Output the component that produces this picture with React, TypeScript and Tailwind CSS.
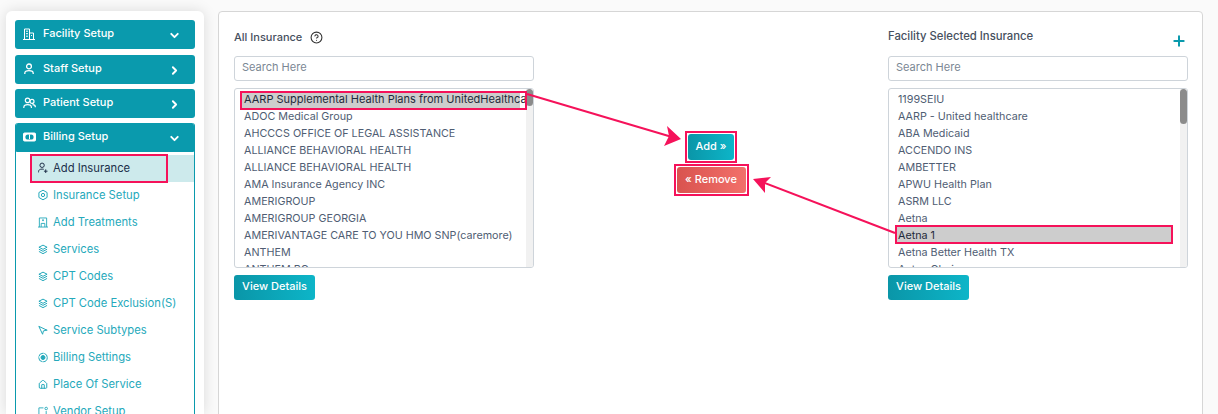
import { ChevronDown, ChevronRight, CircleHelp, Navigation, Plus, House } from "lucide-react"
import type { ReactNode } from "react"

const FONT = "font-['Inter','Noto_Sans',sans-serif]"

const allInsurance = [
  "AARP Supplemental Health Plans from UnitedHealthcare",
  "ADOC Medical Group",
  "AHCCCS OFFICE OF LEGAL ASSISTANCE",
  "ALLIANCE BEHAVIORAL HEALTH",
  "ALLIANCE BEHAVIORAL HEALTH",
  "AMA Insurance Agency INC",
  "AMERIGROUP",
  "AMERIGROUP GEORGIA",
  "AMERIVANTAGE CARE TO YOU HMO SNP(caremore)",
  "ANTHEM",
  "ANTHEM BC",
]

const selectedInsurance = [
  "1199SEIU",
  "AARP - United healthcare",
  "ABA Medicaid",
  "ACCENDO INS",
  "AMBETTER",
  "APWU Health Plan",
  "ASRM LLC",
  "Aetna",
  "Aetna 1",
  "Aetna Better Health TX",
  "Aetna Choice",
]

function BuildingIcon() {
  return (
    <svg width="12" height="12" viewBox="0 0 12 12" fill="none" stroke="currentColor" strokeWidth="1">
      <path d="M1.5 11V1h5v10M6.500 5h4v6M0 11.500h12M3 3.200h2M3 5.700h2M3 8.200h2M8 7.500h1" />
    </svg>
  )
}

function PersonIcon() {
  return (
    <svg width="12" height="12" viewBox="0 0 12 12" fill="none" stroke="currentColor" strokeWidth="1.3">
      <circle cx="6" cy="3.4" r="2.4" />
      <path d="M1.800 11v-.8C1.800 8.400 3.200 7.600 6 7.600s4.200.8 4.200 2.600v.8" />
    </svg>
  )
}

function PeopleIcon() {
  return (
    <svg width="13" height="12" viewBox="0 0 13 12" fill="none" stroke="currentColor" strokeWidth="1.2">
      <circle cx="4.600" cy="3.400" r="2.300" />
      <circle cx="9" cy="4.400" r="2" />
      <path d="M.8 11v-.6c0-1.800 1.400-2.800 3.800-2.800s3.800 1 3.800 2.800v.6M9.500 7.600c1.800 0 2.900.9 2.900 2.600" />
    </svg>
  )
}

function MoneyIcon() {
  return (
    <svg width="13" height="10" viewBox="0 0 13 10" fill="none">
      <rect x="0.5" y="1" width="12" height="8" rx="1" fill="currentColor" stroke="currentColor" />
      <circle cx="5" cy="5" r="2.6" fill="#0a9aad" />
      <circle cx="8" cy="5" r="2.6" fill="#0a9aad" />
      <path d="M6.500 3v4" stroke="currentColor" />
    </svg>
  )
}

function AddUserIcon() {
  return (
    <svg width="11" height="12" viewBox="0 0 11 12" fill="none" stroke="currentColor" strokeWidth="1.1">
      <circle cx="4.500" cy="3" r="2.400" />
      <path d="M.6 10.800V10c0-1.800 1.400-2.800 3.900-2.800.7 0 1.300.1 1.800.2M8.500 7.500v4M6.500 9.500h4" />
    </svg>
  )
}

function GearHexIcon() {
  return (
    <svg width="11" height="12" viewBox="0 0 11 12" fill="none" stroke="currentColor" strokeWidth="1.1">
      <path d="M5.500 .7l4.500 2.600v5.400l-4.500 2.600-4.500-2.600V3.300z" />
      <circle cx="5.500" cy="6" r="1.800" />
    </svg>
  )
}

function TreatmentIcon() {
  return (
    <svg width="11" height="11" viewBox="0 0 11 11" fill="none" stroke="currentColor">
      <path d="M1.500 10.500v-10h8v10M0 10.500h11M4.500 3h2M5.500 2v2M3.500 10.500V6.500h4v4" />
    </svg>
  )
}

function StackIcon() {
  return (
    <svg width="11" height="11" viewBox="0 0 11 11" fill="none" stroke="currentColor" strokeWidth="1.1">
      <path d="M5.500 .7l4.500 2.300-4.500 2.300L1 3zM1 5.200l4.500 2.300L10 5.200M1 7.600l4.500 2.500L10 7.600" />
    </svg>
  )
}

function TargetIcon() {
  return (
    <svg width="11" height="11" viewBox="0 0 11 11" fill="none" stroke="currentColor" strokeWidth="1.1">
      <circle cx="5.500" cy="5.500" r="4.700" strokeDasharray="7 .7" />
      <circle cx="5.500" cy="5.500" r="2.200" fill="currentColor" />
    </svg>
  )
}

function VendorIcon() {
  return (
    <svg width="11" height="11" viewBox="0 0 11 11" fill="none" stroke="currentColor">
      <path d="M1 11V1.500h5M9 5v6" />
      <circle cx="9" cy="2.200" r="1.400" />
    </svg>
  )
}

function SetupHeader({ icon, label, open }: { icon: ReactNode; label: string; open?: boolean }) {
  return (
    <div className="flex h-[29px] items-center rounded-[3px] bg-[#0a9aad] pl-1 pr-[14px] text-white">
      <span className="flex w-5 shrink-0 justify-center pb-[2px]">{icon}</span>
      <span className="ml-1 flex-1 pb-[3px] text-[11px] font-medium">{label}</span>
      {open ? (
        <ChevronDown size={13} strokeWidth={3.5} className="mt-[2px]" />
      ) : (
        <ChevronRight size={13} strokeWidth={3.5} className="mt-[2px]" />
      )}
    </div>
  )
}

function SubItem({ icon, label, active }: { icon: ReactNode; label: string; active?: boolean }) {
  return (
    <div
      className={`flex h-[27px] items-center gap-[5px] pb-[1px] pl-[8px] text-[11.25px] ${
        active ? "bg-[#cdeaec] text-[#20304a]" : "text-[#25a9bb]"
      }`}
    >
      <span className="flex w-[10px] shrink-0 justify-center">{icon}</span>
      <span>{label}</span>
    </div>
  )
}

function Sidebar() {
  return (
    <aside className="flex h-[403px] w-[198px] shrink-0 flex-col rounded-t-[6px] bg-white pl-[9px] pr-[9px] pt-[9px] shadow-[0_0_14px_rgba(0,0,0,0.13)]">
      <div className="flex flex-col">
        <SetupHeader icon={<BuildingIcon />} label="Facility Setup" open />
        <div className="mt-[6px]">
          <SetupHeader icon={<PersonIcon />} label="Staff Setup" />
        </div>
        <div className="mt-[5px]">
          <SetupHeader icon={<PeopleIcon />} label="Patient Setup" />
        </div>
      </div>
      <div className="mt-[5px] flex-1 overflow-hidden rounded-t-[3px] border-x border-[#0a9aad]">
        <div className="-mx-px">
          <SetupHeader icon={<MoneyIcon />} label="Billing Setup" open />
        </div>
        <div className="pl-[14px] pt-[3px]">
          <div className="relative">
            <SubItem icon={<AddUserIcon />} label="Add Insurance" active />
            <div className="absolute -top-px left-0 h-[29px] w-[138px] border-2 border-[#f5125a]" />
          </div>
          <SubItem icon={<GearHexIcon />} label="Insurance Setup" />
          <SubItem icon={<TreatmentIcon />} label="Add Treatments" />
          <SubItem icon={<StackIcon />} label="Services" />
          <SubItem icon={<StackIcon />} label="CPT Codes" />
          <SubItem icon={<StackIcon />} label="CPT Code Exclusion(S)" />
          <SubItem icon={<Navigation size={11} strokeWidth={2.4} className="-scale-x-100" />} label="Service Subtypes" />
          <SubItem icon={<TargetIcon />} label="Billing Settings" />
          <SubItem icon={<House size={11} strokeWidth={2.4} />} label="Place Of Service" />
          <SubItem icon={<VendorIcon />} label="Vendor Setup" />
        </div>
      </div>
    </aside>
  )
}

function InsuranceList({
  items,
  selected,
  thumbHeight,
  fullRow,
}: {
  items: string[]
  selected: number
  thumbHeight: string
  fullRow?: boolean
}) {
  return (
    <div className="flex h-[180px] overflow-hidden rounded-[3px] border border-[#ced4da] bg-white">
      <div className="min-w-0 flex-1 overflow-hidden pl-[9px] pt-[2px] text-[10.75px] leading-[17px] text-[#4f5d73]">
        {items.map((name, i) => (
          <div
            key={name + i}
            className={`whitespace-nowrap ${
              i === selected
                ? `${fullRow ? "-ml-[2px] mr-[9px] pl-[2px]" : "-ml-[3px] mr-[6px] pl-[3px] text-[11px]"} bg-[#cdcdcd] text-[#1f2a3a]`
                : ""
            }`}
          >
            {name}
          </div>
        ))}
      </div>
      <div className="w-[7px] shrink-0 bg-[#f1f1f1]">
        <div className={`${thumbHeight} rounded-[4px] bg-[#8b8b8b]`} />
      </div>
    </div>
  )
}

function SearchBox() {
  return (
    <div className="flex h-[25px] items-center rounded-[3px] border border-[#ced4da] bg-white pb-[2px] pl-[7px] text-[11px] text-[#7b8794]">
      Search Here
    </div>
  )
}

function ViewDetails() {
  return (
    <button className="mt-[7px] h-[25px] w-[81px] rounded-[3px] bg-gradient-to-r from-[#0a96a8] to-[#0db5c8] pb-[2px] text-[11px] font-medium text-white">
      View Details
    </button>
  )
}

// red arrows drawn over the form
function Arrows() {
  return (
    <svg className="pointer-events-none absolute left-0 top-0" width="1218" height="414" fill="none">
      <path d="M527 94 L672 137" stroke="#f5125a" strokeWidth="2" />
      <path d="M681 139 L664 146 L669 136 L667 126 Z" fill="#f5125a" />
      <path d="M895 233 L762 182" stroke="#f5125a" strokeWidth="2" />
      <path d="M753 179 L771 177 L765 183 L765 193 Z" fill="#f5125a" />
    </svg>
  )
}

export default function App() {
  return (
    <div className={`relative h-[414px] w-[1218px] overflow-hidden bg-[#fafafa] ${FONT}`}>
      <div className="flex items-start gap-[14px] pl-[6px] pt-[11px]">
        <Sidebar />
        <main className="flex h-[420px] w-[985px] rounded-t-[4px] border border-[#d6d6d6] bg-white pl-[15px] pr-[14px]">
          <section className="w-[300px]">
            <div className="flex h-[44px] items-center gap-[8px] pt-[6px] text-[11px] font-medium text-[#46505e]">
              All Insurance
              <CircleHelp size={13} className="text-[#333]" />
            </div>
            <SearchBox />
            <div className="mt-[7px]">
              <InsuranceList items={allInsurance} selected={0} thumbHeight="h-[17px]" />
            </div>
            <ViewDetails />
          </section>

          <section className="flex flex-1 flex-col items-center pt-[119px]">
            <div className="border-2 border-[#f5125a] p-[1px]">
              <button className="block h-[26px] w-[46px] rounded-[3px] bg-gradient-to-r from-[#0a96a8] to-[#0db5c8] pb-[2px] text-[11px] font-medium text-white">
                Add »
              </button>
            </div>
            <div className="mt-[1px] border-2 border-[#f5125a] p-[1px]">
              <button className="block h-[26px] w-[69px] rounded-[3px] bg-gradient-to-r from-[#d9534f] to-[#f2706a] pb-[2px] text-[11px] font-medium text-white">
                « Remove
              </button>
            </div>
          </section>

          <section className="w-[300px]">
            <div className="flex h-[44px] items-start justify-between">
              <span className="pt-[16px] text-[11.3px] font-medium text-[#46505e]">Facility Selected Insurance</span>
              <Plus size={16} strokeWidth={3} className="mr-[1px] mt-[21px] text-[#0a9aad]" />
            </div>
            <SearchBox />
            <div className="relative mt-[7px]">
              <InsuranceList items={selectedInsurance} selected={8} thumbHeight="h-[35px]" fullRow />
              <div className="absolute left-[7px] top-[137px] h-[19px] w-[278px] border-2 border-[#f5125a]" />
            </div>
            <ViewDetails />
          </section>
        </main>
      </div>
      <div className="absolute left-[240px] top-[91px] h-[19px] w-[287px] border-2 border-[#f5125a]" />
      <Arrows />
    </div>
  )
}
